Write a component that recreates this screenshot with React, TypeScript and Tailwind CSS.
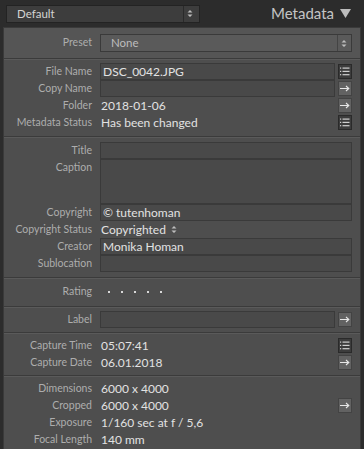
import React from "react";

type Icon = "list" | "arrow" | null;

function ListIcon() {
  return (
    <div className="w-[14px] h-[15px] shrink-0 bg-[#3c3c3c] border border-[#2a2a2a] flex items-center justify-center">
      <svg width="10" height="9" viewBox="0 0 10 9">
        <g fill="#cfcfcf">
          <rect x="0" y="0.5" width="1.2" height="1.2" />
          <rect x="2.5" y="0.5" width="7" height="1.2" />
          <rect x="0" y="3.8" width="1.2" height="1.2" />
          <rect x="2.5" y="3.8" width="7" height="1.2" />
          <rect x="0" y="7.1" width="1.2" height="1.2" />
          <rect x="2.5" y="7.1" width="7" height="1.2" />
        </g>
      </svg>
    </div>
  );
}

function ArrowIcon() {
  return (
    <div className="w-[14px] h-[15px] shrink-0 bg-[#626262] border border-[#434343] flex items-center justify-center">
      <svg width="10" height="7" viewBox="0 0 10 7">
        <path d="M0 3.5 H8.5 M6 1 L8.8 3.5 L6 6" stroke="#e6e6e6" strokeWidth="1.1" fill="none" />
      </svg>
    </div>
  );
}

function Row({
  label,
  value,
  box = false,
  icon = null,
  tall = false,
}: {
  label: string;
  value?: React.ReactNode;
  box?: boolean;
  icon?: Icon;
  tall?: boolean;
}) {
  return (
    <div className={`flex ${tall ? "items-start" : "items-center"} pr-[8px]`}>
      <div className="w-[88px] shrink-0 text-right text-[10.5px] text-[#adadad] h-[17px] leading-[17px] whitespace-nowrap">
        {label}
      </div>
      <div className="ml-[8px] flex-1 flex items-center gap-[3px]">
        <div
          className={`flex-1 ${tall ? "h-[45px]" : "h-[17px]"} flex items-center ${
            box ? "bg-[#494949] border border-[#3a3a3a] pl-[2px]" : "pl-[1px]"
          }`}
        >
          <span className="text-[12px] text-[#e2e2e2] whitespace-nowrap">{value}</span>
        </div>
        {icon === "list" && <ListIcon />}
        {icon === "arrow" && <ArrowIcon />}
      </div>
    </div>
  );
}

function Sep() {
  return <div className="h-[2px] border-t border-[#3b3b3b] border-b border-b-[#5a5a5a]" />;
}

function UpDown() {
  return (
    <svg width="6" height="9" viewBox="0 0 6 9">
      <path d="M0.5 3.5 L3 1 L5.5 3.5 Z M0.5 5.5 L3 8 L5.5 5.5 Z" fill="#bdbdbd" />
    </svg>
  );
}

export default function App() {
  return (
    <div
      className="w-[364px] h-[449px] bg-[#2c2c2c] overflow-hidden flex flex-col"
      style={{ fontFamily: "Lato, 'Open Sans', sans-serif" }}
    >
      {/* header */}
      <div className="h-[27px] shrink-0 flex items-center pl-[6px] pr-[13px]">
        <div className="w-[194px] h-[18px] bg-[#3d3d3d] border border-[#232323] flex items-center pl-[10px] pr-[6px]">
          <span className="flex-1 text-[11.5px] text-[#d4d4d4]">Default</span>
          <div className="h-full border-l border-[#2a2a2a] pl-[3px] flex items-center">
            <UpDown />
          </div>
        </div>
        <div className="flex-1" />
        <span className="text-[15px] text-[#c4c4c4] mr-[6px]">Metadata</span>
        <svg width="11" height="9" viewBox="0 0 11 9">
          <path d="M0 0 H11 L5.5 9 Z" fill="#bcbcbc" />
        </svg>
      </div>

      {/* panel */}
      <div className="flex-1 mx-[3px] border-t border-x border-[#3a3a3a] bg-[#4e4e4e]">
        <div className="bg-[#555555] h-[30px] flex items-center pr-[8px]">
          <div className="w-[88px] text-right text-[10.5px] text-[#adadad]">Preset</div>
          <div className="ml-[8px] flex-1 h-[18px] bg-[#5a5a5a] border border-[#3a3a3a] flex items-center pl-[10px] pr-[4px]">
            <span className="flex-1 text-[11.5px] text-[#bdbdbd]">None</span>
            <div className="h-full border-l border-[#444] pl-[3px] flex items-center">
              <UpDown />
            </div>
          </div>
        </div>
        <Sep />

        <div className="pt-[3px] pb-[5px]">
          <Row label="File Name" value="DSC_0042.JPG" box icon="list" />
          <Row label="Copy Name" box icon="arrow" />
          <Row label="Folder" value="2018-01-06" icon="arrow" />
          <Row label="Metadata Status" value="Has been changed" icon="list" />
        </div>
        <Sep />

        <div className="pt-[4px] pb-[5px]">
          <Row label="Title" box />
          <Row label="Caption" box tall />
          <Row label="Copyright" value="© tutenhoman" box />
          <Row
            label="Copyright Status"
            value={
              <span className="flex items-center gap-[5px]">
                Copyrighted <UpDown />
              </span>
            }
          />
          <Row label="Creator" value="Monika Homan" box />
          <Row label="Sublocation" box />
        </div>
        <Sep />

        <div className="pt-[4px] pb-[6px]">
          <Row
            label="Rating"
            value={
              <span className="flex gap-[11px] pl-[7px]">
                {[0, 1, 2, 3, 4].map((i) => (
                  <span key={i} className="w-[2px] h-[2px] bg-[#d8d8d8] inline-block" />
                ))}
              </span>
            }
          />
        </div>
        <Sep />

        <div className="pt-[3px] pb-[4px]">
          <Row label="Label" box icon="arrow" />
        </div>
        <Sep />

        <div className="pt-[3px] pb-[4px]">
          <Row label="Capture Time" value="05:07:41" icon="list" />
          <Row label="Capture Date" value="06.01.2018" icon="arrow" />
        </div>
        <Sep />

        <div className="pt-[3px]">
          <Row label="Dimensions" value="6000 x 4000" />
          <Row label="Cropped" value="6000 x 4000" icon="arrow" />
          <Row label="Exposure" value="1/160 sec at f / 5,6" />
          <Row label="Focal Length" value="140 mm" />
        </div>
      </div>
    </div>
  );
}
